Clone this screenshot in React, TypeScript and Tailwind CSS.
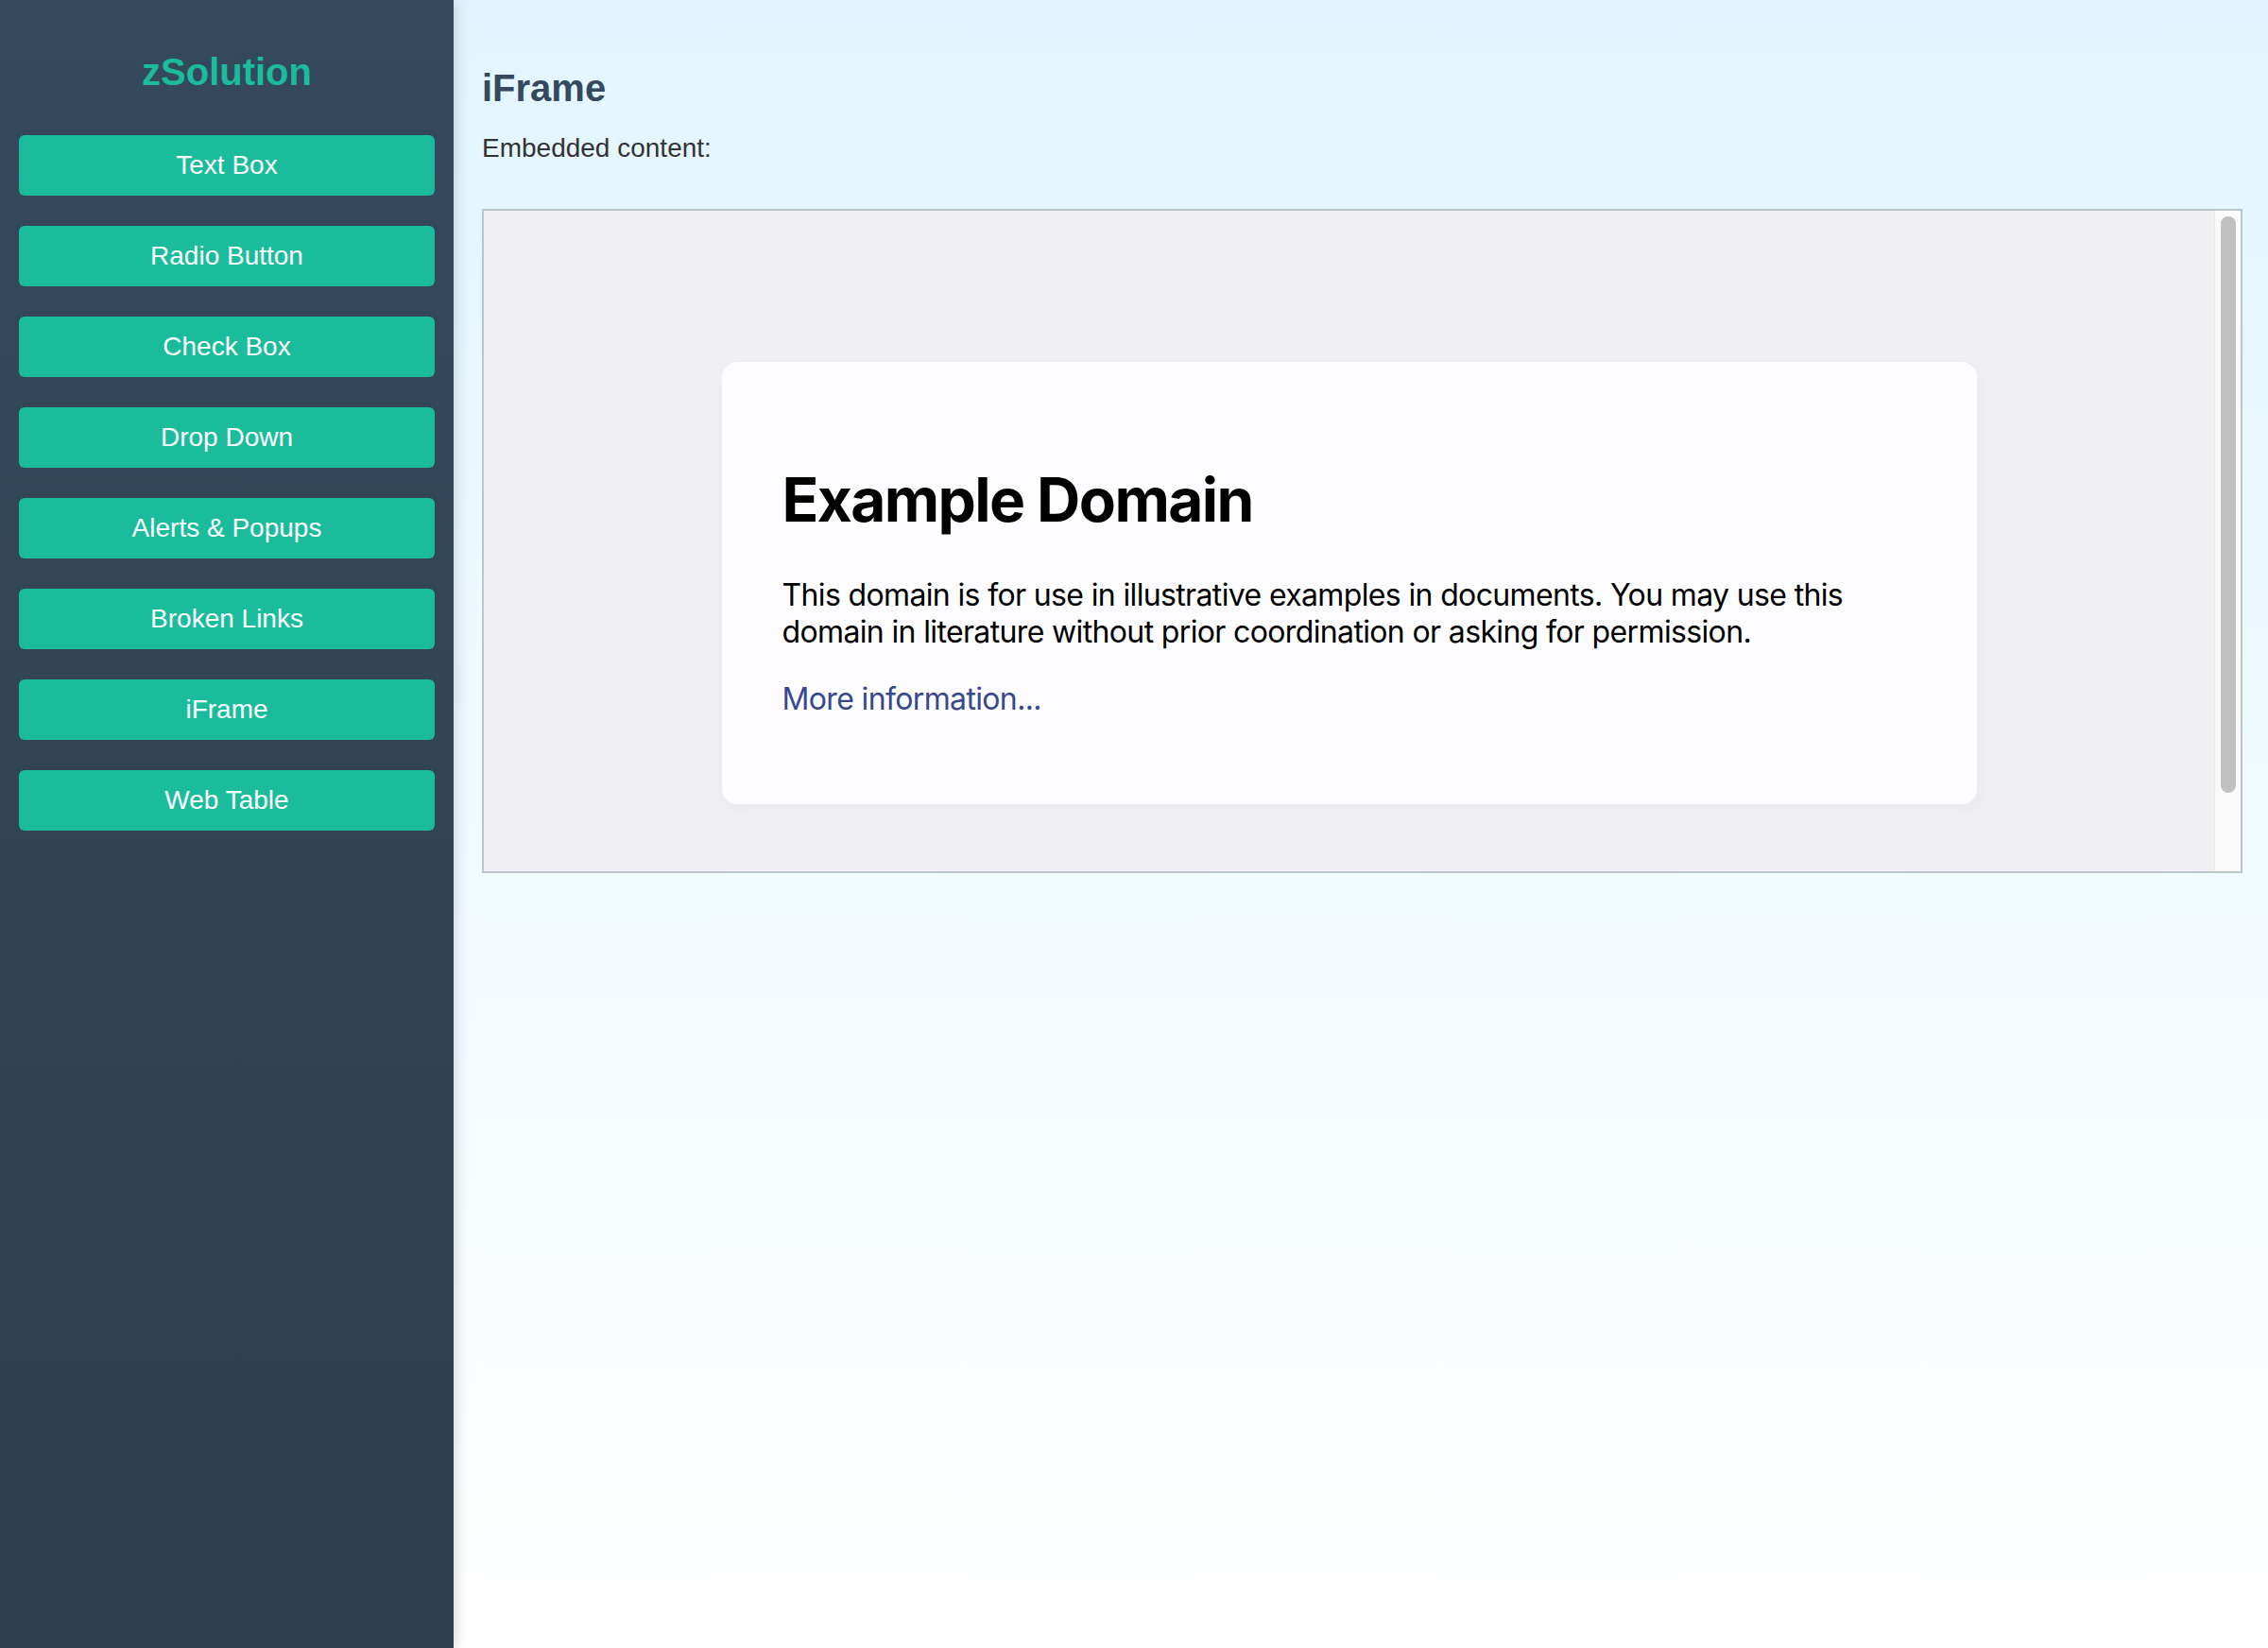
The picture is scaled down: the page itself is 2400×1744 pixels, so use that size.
const navItems = [
  "Text Box",
  "Radio Button",
  "Check Box",
  "Drop Down",
  "Alerts & Popups",
  "Broken Links",
  "iFrame",
  "Web Table",
];

function Sidebar() {
  return (
    <aside className="relative z-10 flex w-[480px] shrink-0 flex-col bg-linear-to-b from-[#35495e] to-[#2c3e50] px-[20px] pt-[54px] shadow-[3px_0_14px_rgba(0,0,0,0.14)]">
      <h2 className="text-center text-[40px] leading-[normal] font-bold text-[#1abc9c]">
        zSolution
      </h2>
      <nav className="mt-[44px] flex flex-col gap-[32px]">
        {navItems.map((item) => (
          <button
            key={item}
            className="h-[64px] w-full rounded-[6px] bg-[#1abc9c] text-[28px] text-white"
          >
            {item}
          </button>
        ))}
      </nav>
    </aside>
  );
}

// What the embedded page shows
function EmbeddedPage() {
  return (
    <div className="flex h-full">
      <div className="flex-1 overflow-hidden bg-[#f0f0f2] font-['Inter',sans-serif]">
        <div className="mx-auto mt-[160px] w-[1328px] rounded-[16px] bg-[#fdfdff] p-[64px] shadow-[4px_6px_14px_4px_rgba(0,0,0,0.02)]">
          <h1 className="my-[43px] text-[64px] leading-[normal] font-bold tracking-[-0.025em] text-black">
            Example Domain
          </h1>
          <p className="text-[32px] leading-[normal] tracking-[-0.02em] text-black">
            This domain is for use in illustrative examples in documents. You may use this domain in literature without prior coordination or asking for permission.
          </p>
          <p className="mt-[32px] mb-[28px] text-[32px] leading-[normal] tracking-[-0.02em]">
            <a href="#" className="text-[#38488f]">
              More information...
            </a>
          </p>
        </div>
      </div>
      {/* Scrollbar */}
      <div className="w-[28px] shrink-0 border-l border-[#e8e8e8] bg-[#fafafa] pt-[6px] pr-[5px] pl-[6px]">
        <div className="h-[610px] w-[16px] rounded-full bg-[#c1c1c1]" />
      </div>
    </div>
  );
}

export default function App() {
  return (
    <div className="flex min-h-screen font-['Liberation_Sans',Arial,sans-serif]">
      <Sidebar />
      <main className="flex-1 bg-linear-to-b from-[#e2f5fe] to-white pt-[71px] pr-[27px] pl-[30px]">
        <h2 className="text-[40px] leading-[normal] font-bold text-[#34495e]">
          iFrame
        </h2>
        <p className="mt-[25px] text-[28px] leading-[normal] text-[#333]">
          Embedded content:
        </p>
        <div className="mt-[48px] h-[703px] w-full border-2 border-[#bcc5cc]">
          <EmbeddedPage />
        </div>
      </main>
    </div>
  );
}
